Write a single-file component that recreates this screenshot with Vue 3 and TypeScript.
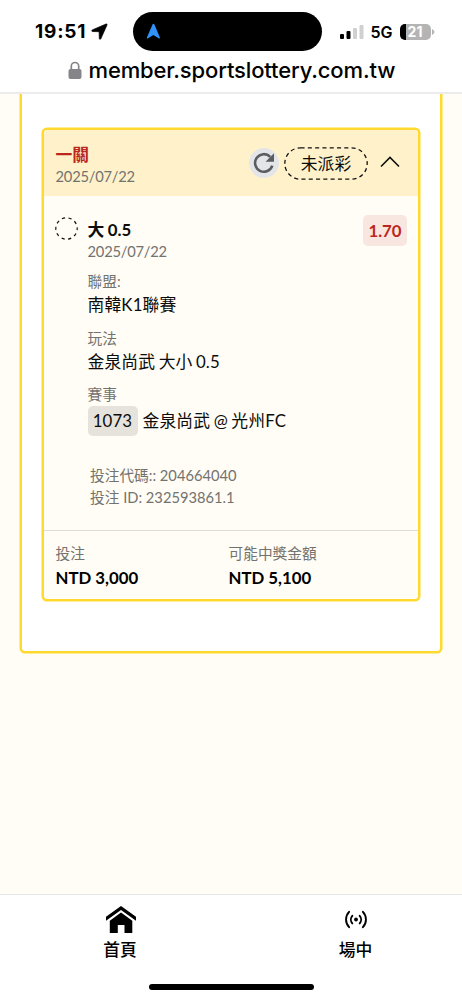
<script setup lang="ts">
interface Field {
  label: string
  value: string
  code?: string
}

interface Stake {
  label: string
  amount: string
}

const fields: Field[] = [
  { label: '聯盟:', value: '南韓K1聯賽' },
  { label: '玩法', value: '金泉尚武 大小 0.5' },
  { label: '賽事', value: '金泉尚武 @ 光州FC', code: '1073' },
]

const stakes: Stake[] = [
  { label: '投注', amount: 'NTD 3,000' },
  { label: '可能中獎金額', amount: 'NTD 5,100' },
]
</script>

<template>
  <div class="screen">
    <header class="browser-bar">
      <div class="status">
        <span class="clock">19:51</span>
        <svg class="location" width="17" height="17" viewBox="0 0 17 17"><path d="M15 1 1.3 6.9c-.9.5-.7 1.5.3 1.6l6.5.2.2 6.8c.1 1 1.1 1.1 1.5.3L16 2c.3-.7-.2-1.3-1-1Z" stroke="#000" stroke-width=".7" stroke-linejoin="round" /></svg>
        <div class="island">
          <svg width="15" height="17" viewBox="0 0 15 17"><path d="M6.5 1.5 1 14.2c-.4 1 .3 1.6 1.1 1.1l5.2-3.4 5.4 3.4c.9.5 1.5-.1 1.1-1.1L8.4 1.5c-.4-.9-1.5-.9-1.9 0Z" fill="#2f93fb" /></svg>
        </div>
        <svg class="signal" width="24" height="16" viewBox="0 0 24 16">
          <rect x="0" y="10" width="4" height="5" rx="1" />
          <rect x="6.5" y="7" width="4" height="8" rx="1" />
          <rect x="13" y="4" width="4" height="11" rx="1" fill="#d0d0d0" />
          <rect x="19.5" y="1" width="4" height="14" rx="1" fill="#d0d0d0" />
        </svg>
        <span class="network">5G</span>
        <div class="battery"><span>21</span></div>
        <svg class="battery-tip" width="3" height="6" viewBox="0 0 3 6"><path d="M0 0q5 3 0 6Z" fill="#b4b4b4" /></svg>
      </div>
      <div class="address">
        <svg width="14" height="19" viewBox="0 0 14 19">
          <path d="M3.3 9V5.2a3.7 3.7 0 0 1 7.4 0V9" fill="none" stroke="#858589" stroke-width="1.7" />
          <rect x=".5" y="8" width="13" height="10" rx="2" fill="#858589" />
        </svg>
        <span>member.sportslottery.com.tw</span>
      </div>
    </header>

    <main class="page">
      <section class="panel">
        <article class="ticket">
          <div class="ticket-head">
            <div class="head-text">
              <div class="kind">一關</div>
              <div class="date">2025/07/22</div>
            </div>
            <div class="refresh">
              <svg width="22" height="22" viewBox="0 0 22 22">
                <path d="M19.3 13.6A8.8 8.8 0 1 1 17.2 4.8" fill="none" stroke="#5b5c60" stroke-width="2.6" />
                <path d="M21 1.3v8.5h-8.5Z" fill="#5b5c60" />
              </svg>
            </div>
            <div class="pill">
              <svg width="84" height="33" viewBox="0 0 84 33"><rect x=".8" y=".8" width="82.4" height="31.4" rx="15.7" fill="none" stroke="#111" stroke-width="1.3" stroke-dasharray="4.1 3.2" /></svg>
              <span>未派彩</span>
            </div>
            <svg class="chevron" width="20" height="12" viewBox="0 0 20 12"><path d="m1 10.5 9-9 9 9" fill="none" stroke="#111" stroke-width="1.6" /></svg>
          </div>

          <div class="selection">
            <svg class="pending" width="23" height="23" viewBox="0 0 23 23"><circle cx="11.5" cy="11.5" r="10.7" fill="none" stroke="#111" stroke-width="1.2" stroke-dasharray="3.2 3.52" stroke-dashoffset="1.6" /></svg>
            <div class="details">
              <div class="pick">大 0.5</div>
              <div class="date">2025/07/22</div>
              <div v-for="field in fields" :key="field.label" class="field">
                <div class="label">{{ field.label }}</div>
                <div class="value" :class="{ match: field.code }">
                  <span v-if="field.code" class="code">{{ field.code }}</span>
                  <span>{{ field.value }}</span>
                </div>
              </div>
              <div class="reference">
                <div>投注代碼:: 204664040</div>
                <div>投注 ID: 232593861.1</div>
              </div>
            </div>
            <span class="odds">1.70</span>
          </div>

          <div class="stakes">
            <div v-for="stake in stakes" :key="stake.label">
              <div class="label">{{ stake.label }}</div>
              <div class="amount">{{ stake.amount }}</div>
            </div>
          </div>
        </article>
      </section>
    </main>

    <nav class="tabs">
      <div class="tab">
        <svg width="32" height="30" viewBox="0 0 32 30">
          <path d="M17 1 2 11.8v4L17 5l15 10.8v-4Z" />
          <path d="M17 7.6 5.8 15.7V28h8v-8h6.7v8h7.8V15.7Z" />
        </svg>
        <span>首頁</span>
      </div>
      <div class="tab">
        <svg width="32" height="30" viewBox="0 0 32 30">
          <circle cx="16" cy="14.5" r="1.9" />
          <g fill="none" stroke="#000" stroke-width="1.9" stroke-linecap="round">
            <path d="M12.3 10.8a5.8 5.8 0 0 0 0 7.6M19.7 10.8a5.8 5.8 0 0 1 0 7.6M9.1 6.8a11.2 11.2 0 0 0 0 15.4M22.9 6.8a11.2 11.2 0 0 1 0 15.4" />
          </g>
        </svg>
        <span>場中</span>
      </div>
      <div class="home-indicator"></div>
    </nav>
  </div>
</template>

<style>
body {
  background: #fffdf5;
}
</style>

<style scoped>
* {
  box-sizing: border-box;
}

.screen {
  display: flex;
  flex-direction: column;
  width: 462px;
  height: 1000px;
  overflow: hidden;
  background: #fffdf5;
  color: #0c0c0c;
  font-family: Lato, 'Noto Sans CJK TC', sans-serif;
  font-size: 16.8px;
}

svg {
  display: block;
  flex: none;
}

.browser-bar {
  position: relative;
  flex: none;
  height: 94px;
  background: #fff;
  border-bottom: 2px solid #ececec;
  color: #000;
  font-family: Inter, sans-serif;
  white-space: nowrap;
}

.status {
  display: flex;
  align-items: center;
  height: 51px;
  padding: 12px 0 0 35px;
}

.clock {
  width: 55.5px;
  font-size: 19px;
  font-weight: 700;
  letter-spacing: 0.8px;
}

.island {
  display: flex;
  align-items: center;
  width: 188.5px;
  height: 39px;
  margin-left: 25.5px;
  padding-left: 13px;
  border-radius: 20px;
  background: #000;
}

.signal {
  margin-left: 18px;
}

.network {
  width: 29px;
  margin-left: 7px;
  font-size: 16px;
  font-weight: 600;
}

.battery {
  width: 31px;
  height: 16px;
  border-radius: 5px;
  background: linear-gradient(90deg, #000 6px, #b4b4b4 6px);
  color: #fff;
  font-size: 14px;
  font-weight: 700;
  line-height: 16px;
  text-align: center;
}

.battery-tip {
  margin-left: 1px;
}

.address {
  display: flex;
  align-items: center;
  height: 38px;
  padding-left: 67.5px;
  font-size: 22px;
  font-weight: 500;
  letter-spacing: -0.14px;
}

.address span {
  margin-left: 7px;
}

.page {
  flex: 1;
}

.panel {
  width: 422px;
  height: 559px;
  margin-left: 20px;
  padding: 34px 20px 0;
  border: 2px solid #ffd92e;
  border-top: 0;
  border-radius: 0 0 5px 5px;
  box-shadow: 0 0 0 0.5px #ffd92e;
  background: #fff;
}

.ticket {
  width: 378px;
  height: 473px;
  overflow: hidden;
  border: 2px solid #ffd92e;
  border-radius: 5px;
  box-shadow: 0 0 0 0.5px #ffd92e;
  background: #fffdf5;
}

.ticket-head {
  display: flex;
  height: 66px;
  padding-left: 11.5px;
  background: #fff2cb;
}

.head-text {
  width: 193.5px;
  padding-top: 14px;
}

.kind {
  color: #bb271f;
  font-weight: 700;
  line-height: 22px;
}

.date,
.label,
.reference {
  color: #73726f;
  font-size: 14.7px;
  line-height: 22px;
}

.date {
  margin-top: -1px;
  letter-spacing: -0.2px;
}

.refresh {
  display: flex;
  align-items: center;
  justify-content: center;
  width: 30px;
  height: 30px;
  margin-top: 18px;
  border-radius: 50%;
  background: #e4e5e9;
}

.pill {
  display: grid;
  place-items: center;
  width: 84px;
  height: 33px;
  margin: 17px 0 0 5px;
}

.pill > * {
  grid-area: 1 / 1;
}

.pill span {
  line-height: 33px;
}

.chevron {
  margin: 26px 0 0 12px;
}

.selection {
  display: flex;
  align-items: flex-start;
  height: 334px;
  padding: 19px 11px 0 11px;
}

.pending {
  margin-top: 2px;
}

.details {
  flex: 1;
  padding: 4px 0 0 9.5px;
}

.pick {
  font-weight: 700;
  line-height: 22px;
  word-spacing: -0.5px;
}

.field {
  margin-top: 8px;
}

.field + .field {
  margin-top: 9px;
}

.value {
  letter-spacing: 0.15px;
  word-spacing: -1px;
  line-height: 25.6px;
}

.match {
  display: flex;
  align-items: center;
  gap: 5px;
  margin-top: 1px;
  line-height: 30px;
}

.code {
  width: 50px;
  height: 30px;
  border-radius: 5px;
  background: #e5e3dc;
  text-align: center;
}

.reference {
  margin: 28px 0 0 2.5px;
}

.odds {
  width: 44px;
  height: 31px;
  border-radius: 5px;
  background: #f8e7e0;
  color: #bb271f;
  font-weight: 700;
  line-height: 32px;
  text-align: center;
}

.stakes {
  display: grid;
  grid-template-columns: 173px 1fr;
  padding: 11px 0 0 11.5px;
  border-top: 1px solid #dddcd7;
}

.amount {
  color: #000;
  font-weight: 700;
  line-height: 27px;
}

.tabs {
  display: grid;
  grid-template-columns: 240px 231px;
  grid-template-rows: 89px 6px;
  flex: none;
  height: 106px;
  border-top: 1px solid #e5e5e5;
  background: #fff;
  color: #000;
}

.tab {
  display: flex;
  flex-direction: column;
  align-items: center;
  padding-top: 10px;
  font-weight: 500;
}

.tab span {
  line-height: 30px;
}

.home-indicator {
  grid-column: 1 / -1;
  width: 165px;
  height: 6px;
  margin-left: 149px;
  border-radius: 3px;
  background: #000;
}
</style>
